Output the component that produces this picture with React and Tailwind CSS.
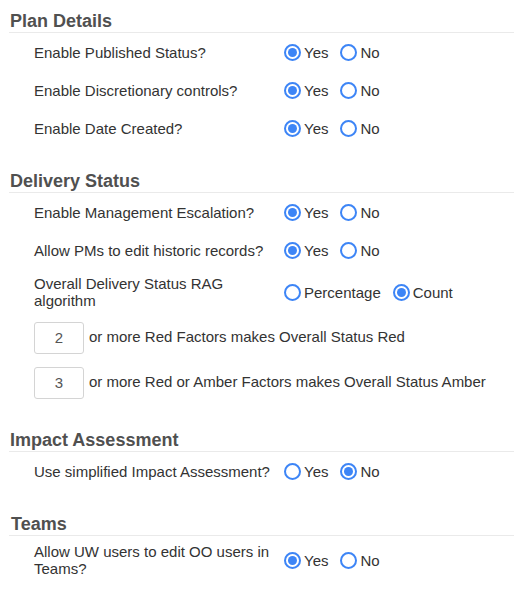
import React, { useState } from "react";

const font = { fontFamily: '"Liberation Sans", Arial, sans-serif' };

const Radio = ({ label, checked, onClick }) => {
  return (
    <label
      className="flex items-center mr-[12px] cursor-pointer select-none"
      onClick={onClick}
    >
      <span className="flex w-[17px] h-[17px] rounded-full border-2 border-[#3d85f6] items-center justify-center bg-white">
        {checked && (
          <span className="block w-[9px] h-[9px] rounded-full bg-[#3d85f6]" />
        )}
      </span>
      <span className="ml-[3px] text-[15px] leading-[17px] text-[#333]">
        {label}
      </span>
    </label>
  );
};

const RadioRow = ({ label, options, initial, rowClass }) => {
  const [value, setValue] = useState(initial);
  return (
    <div className={`flex items-center pl-[25px] ${rowClass}`}>
      <div className="w-[250px] pr-[12px] text-[15px] leading-[17px] text-[#333]">
        {label}
      </div>
      <div className="flex items-center">
        {options.map((opt) => (
          <Radio
            key={opt}
            label={opt}
            checked={value === opt}
            onClick={() => setValue(opt)}
          />
        ))}
      </div>
    </div>
  );
};

const SectionTitle = ({ title, className }) => {
  return (
    <div className={`border-b border-[#eaeaea] pb-px ${className}`}>
      <h2 className="pl-px text-[18px] leading-[20px] font-bold text-[#505050]">
        {title}
      </h2>
    </div>
  );
};

const CountRow = ({ initial, text }) => {
  return (
    <div className="flex items-center h-[45px] pl-[25px]">
      <input
        type="text"
        defaultValue={initial}
        className="w-[50px] h-[32px] border border-[#d4d4d4] rounded-[3px] text-center text-[15px] text-[#555] outline-none"
      />
      <span className="ml-[5px] text-[15px] text-[#333]">{text}</span>
    </div>
  );
};

export default function App() {
  const yesNo = ["Yes", "No"];
  return (
    <div className="w-[514px] h-[601px] bg-white pl-[9px] pt-[11px]" style={font}>
      <SectionTitle title="Plan Details" />
      <RadioRow label="Enable Published Status?" options={yesNo} initial="Yes" rowClass="h-[38px]" />
      <RadioRow label="Enable Discretionary controls?" options={yesNo} initial="Yes" rowClass="h-[38px]" />
      <RadioRow label="Enable Date Created?" options={yesNo} initial="Yes" rowClass="h-[38px]" />

      <SectionTitle title="Delivery Status" className="mt-[24px]" />
      <RadioRow label="Enable Management Escalation?" options={yesNo} initial="Yes" rowClass="h-[38px]" />
      <RadioRow label="Allow PMs to edit historic records?" options={yesNo} initial="Yes" rowClass="h-[38px]" />
      <RadioRow
        label="Overall Delivery Status RAG algorithm"
        options={["Percentage", "Count"]}
        initial="Count"
        rowClass="py-[6px]"
      />
      <CountRow initial="2" text="or more Red Factors makes Overall Status Red" />
      <CountRow initial="3" text="or more Red or Amber Factors makes Overall Status Amber" />

      <SectionTitle title="Impact Assessment" className="mt-[25px]" />
      <RadioRow label="Use simplified Impact Assessment?" options={yesNo} initial="No" rowClass="h-[38px]" />

      <SectionTitle title="Teams" className="mt-[24px] [&>h2]:pl-[2px]" />
      <RadioRow
        label="Allow UW users to edit OO users in Teams?"
        options={yesNo}
        initial="Yes"
        rowClass="py-[7px]"
      />
    </div>
  );
}
